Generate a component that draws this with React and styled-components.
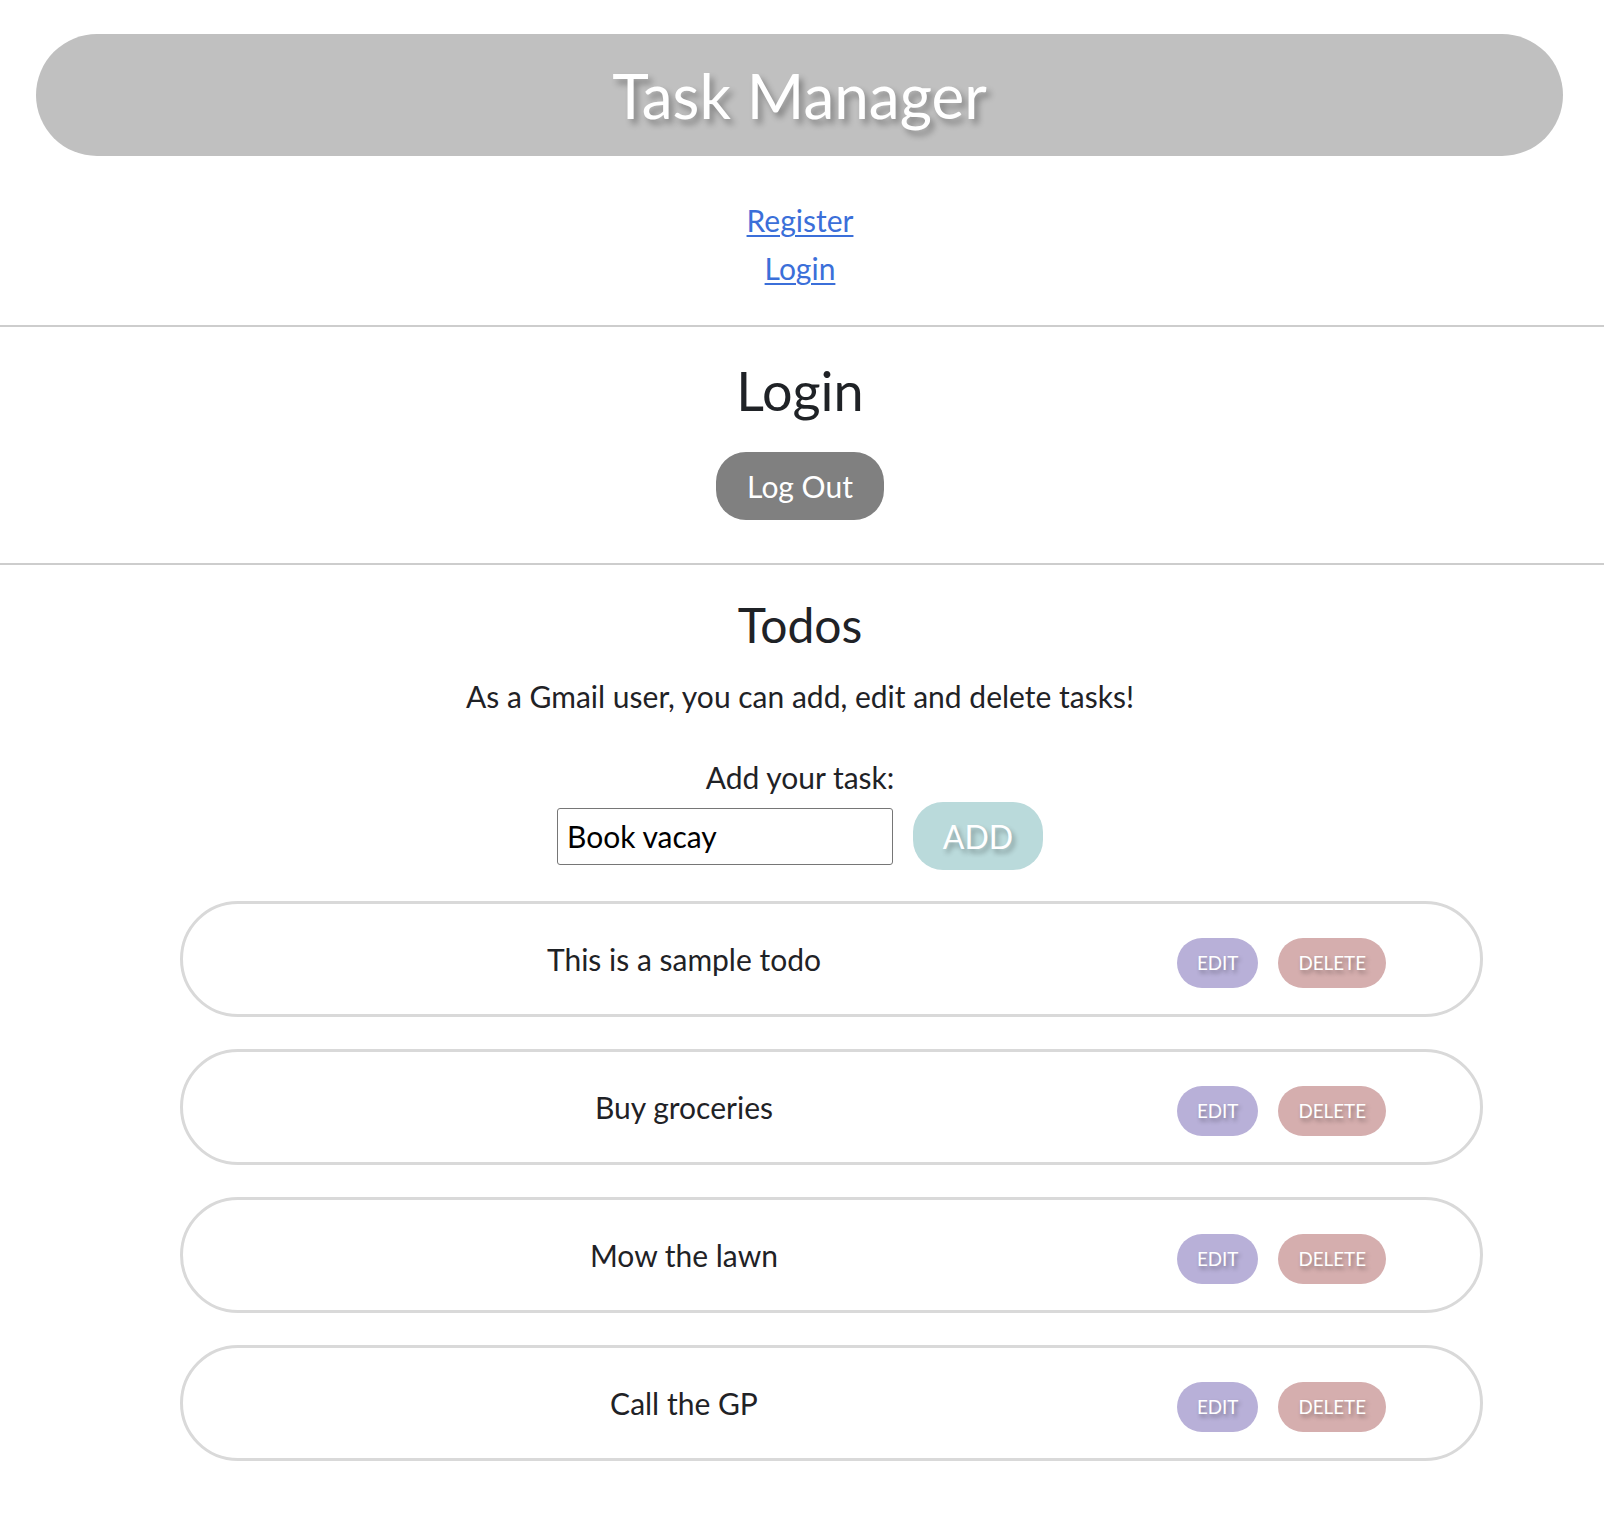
import React, { useState } from "react";
import styled, { createGlobalStyle } from "styled-components";

const GlobalStyle = createGlobalStyle`
  html, body {
    margin: 0;
    padding: 0;
    background: #ffffff;
  }
  body {
    font-family: "Lato", "Noto Sans", sans-serif;
    color: #212529;
  }
  * { box-sizing: border-box; }
`;

const Page = styled.div`
  display: flex;
  flex-direction: column;
  padding-bottom: 60px;
`;

const Header = styled.header`
  margin: 34px 41px 0 36px;
  height: 122px;
  background: #c0c0c0;
  border-radius: 61px;
  display: flex;
  align-items: center;
  justify-content: center;
`;

const Title = styled.h1`
  margin: 0;
  font-size: 62px;
  font-weight: 400;
  line-height: 1.2;
  color: #ffffff;
  text-shadow: 4px 5px 6px rgba(0, 0, 0, 0.32);
`;

const Nav = styled.nav`
  margin-top: 40px;
  padding-right: 4px;
  display: flex;
  flex-direction: column;
  align-items: center;
  font-size: 30px;
  line-height: 48px;
`;

const NavLink = styled.a`
  color: #3b6fd9;
  text-decoration: underline;
  text-decoration-thickness: 2px;
  text-underline-offset: 3px;
`;

const Divider = styled.hr`
  margin: ${(p) => p.$top}px 0 0;
  border: none;
  height: 2px;
  background: #cdcdcd;
`;

const Section = styled.section`
  padding-top: ${(p) => p.$top}px;
  padding-right: 4px;
  display: flex;
  flex-direction: column;
  align-items: center;
`;

const Heading = styled.h2`
  margin: 0;
  font-size: ${(p) => p.$size}px;
  font-weight: 400;
  line-height: 1.2;
  color: #1f2226;
`;

const LogOutButton = styled.button`
  margin-top: 28px;
  width: 168px;
  height: 68px;
  border: none;
  border-radius: 30px;
  background: #808080;
  color: #ffffff;
  font-family: inherit;
  font-size: 30px;
  line-height: 40px;
  padding: 0;
  cursor: pointer;
`;

const Intro = styled.p`
  margin: 25px 0 0;
  font-size: 30px;
  line-height: 36px;
  color: #1f2226;
`;

const Label = styled.label`
  margin-top: 45px;
  font-size: 30px;
  line-height: 36px;
  color: #1f2226;
`;

const FormRow = styled.div`
  margin-top: 7px;
  display: flex;
  align-items: center;
  gap: 20px;
`;

const TaskInput = styled.input`
  width: 336px;
  height: 57px;
  padding: 0 9px;
  border: 1px solid #767676;
  border-radius: 3px;
  font-family: inherit;
  font-size: 30px;
  color: #000000;
  background: #ffffff;
  outline: none;
`;

const AddButton = styled.button`
  width: 130px;
  height: 68px;
  border: none;
  border-radius: 30px;
  background: #badadb;
  color: #ffffff;
  font-family: inherit;
  font-size: 32px;
  padding: 0;
  text-shadow: 3px 4px 5px rgba(0, 0, 0, 0.3);
  cursor: pointer;
`;

const TodoList = styled.ul`
  list-style: none;
  margin: 31px 0 0;
  padding: 0 117px 0 180px;
  display: flex;
  flex-direction: column;
  gap: 32px;
  align-self: stretch;
`;

const TodoRow = styled.li`
  height: 116px;
  border: 3px solid #d9d9d9;
  border-radius: 58px;
  display: flex;
  align-items: center;
`;

const TodoText = styled.span`
  flex: 1;
  padding-left: 8px;
  text-align: center;
  font-size: 30px;
  line-height: 36px;
  color: #1f2226;
`;

const Actions = styled.div`
  display: flex;
  gap: 20px;
  margin-right: 94px;
  padding-top: 7px;
`;

const ActionButton = styled.button`
  border: none;
  border-radius: 25px;
  height: 50px;
  padding: 0 20px;
  background: ${(p) => p.$bg};
  color: #ffffff;
  font-family: inherit;
  font-size: 18.8px;
  line-height: 24px;
  text-transform: uppercase;
  text-shadow: 2px 3px 4px rgba(0, 0, 0, 0.35);
  cursor: pointer;
`;

const todos = [
  "This is a sample todo",
  "Buy groceries",
  "Mow the lawn",
  "Call the GP",
];

export default function App() {
  const [task, setTask] = useState("Book vacay");
  return (
    <Page>
      <GlobalStyle />
      <Header>
        <Title>Task Manager</Title>
      </Header>
      <Nav>
        <NavLink href="#register">Register</NavLink>
        <NavLink href="#login">Login</NavLink>
      </Nav>
      <Divider $top={33} />
      <Section $top={32}>
        <Heading $size={54}>Login</Heading>
        <LogOutButton>Log Out</LogOutButton>
      </Section>
      <Divider $top={43} />
      <Section $top={31}>
        <Heading $size={48}>Todos</Heading>
        <Intro>As a Gmail user, you can add, edit and delete tasks!</Intro>
        <Label htmlFor="task">Add your task:</Label>
        <FormRow>
          <TaskInput
            id="task"
            value={task}
            onChange={(e) => setTask(e.target.value)}
          />
          <AddButton>ADD</AddButton>
        </FormRow>
        <TodoList>
          {todos.map((t) => (
            <TodoRow key={t}>
              <TodoText>{t}</TodoText>
              <Actions>
                <ActionButton $bg="#b8b0d8">Edit</ActionButton>
                <ActionButton $bg="#d5aeae">Delete</ActionButton>
              </Actions>
            </TodoRow>
          ))}
        </TodoList>
      </Section>
    </Page>
  );
}
